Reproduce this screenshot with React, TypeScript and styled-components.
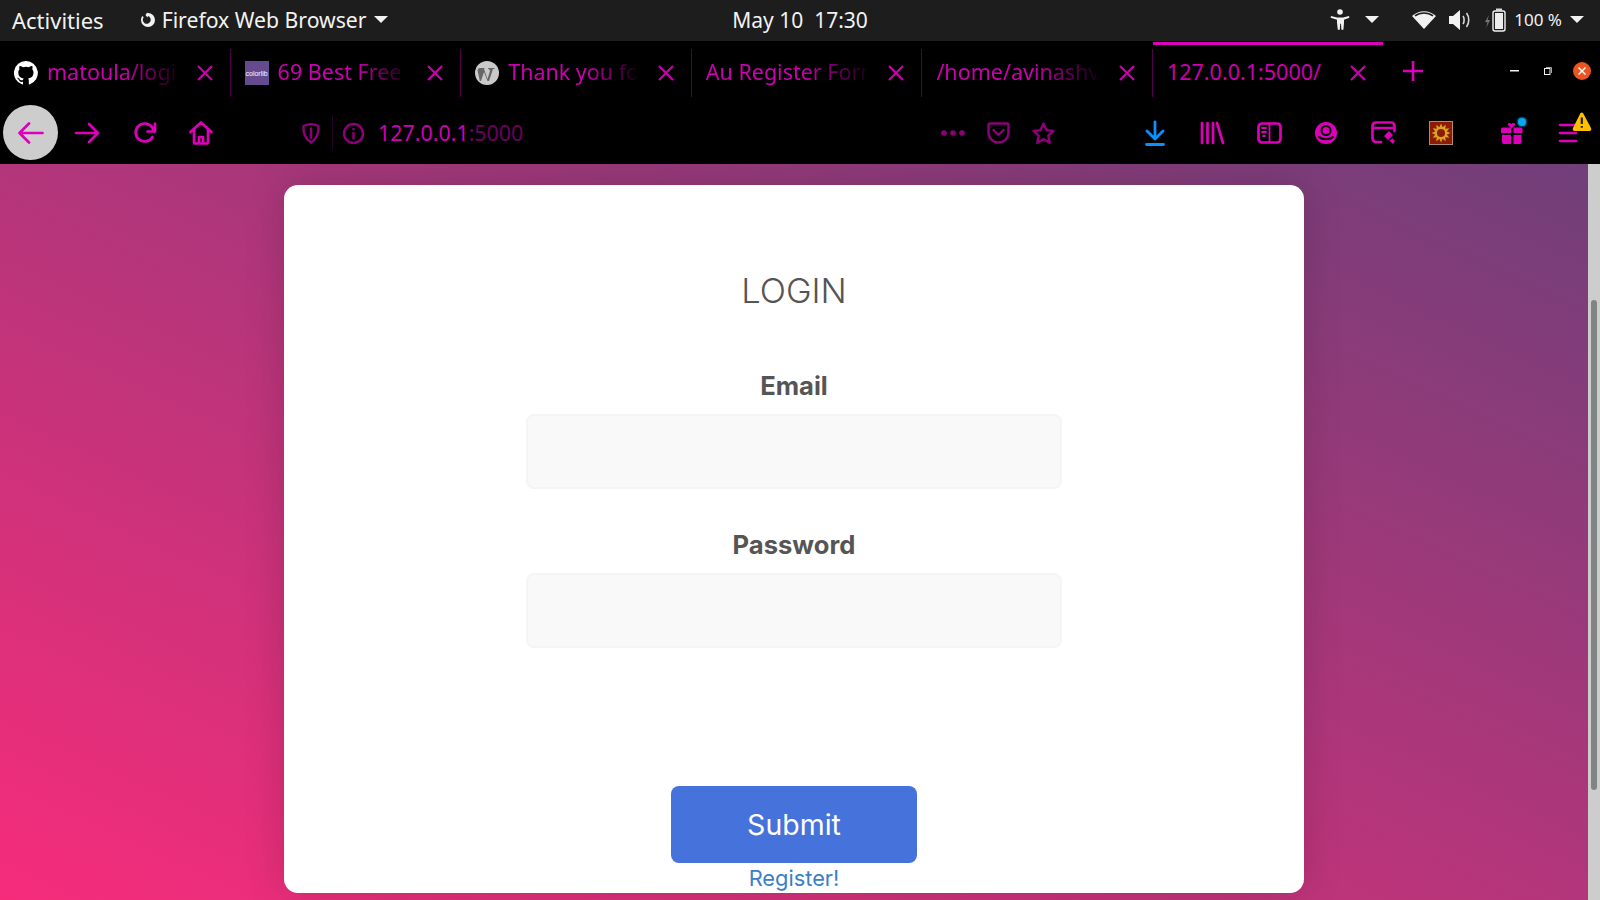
import React from "react";
import styled, { createGlobalStyle } from "styled-components";

const MAGENTA = "#dc00bb";
const DIM = "#8e0079";
const UI_FONT = '"Noto Sans", "DejaVu Sans", sans-serif';
const FORM_FONT = '"Inter", "Open Sans", sans-serif';

const GlobalStyle = createGlobalStyle`
  html, body {
    margin: 0;
    padding: 0;
    height: 100%;
    overflow: hidden;
    background: #000;
  }
  #root {
    height: 100%;
  }
`;

const Screen = styled.div`
  display: flex;
  flex-direction: column;
  width: 1600px;
  height: 900px;
  overflow: hidden;
`;

/* gnome top bar */
const TopBar = styled.div`
  display: grid;
  grid-template-columns: 1fr auto 1fr;
  align-items: center;
  box-sizing: border-box;
  height: 41px;
  padding-bottom: 2px;
  background: #1d1d1d;
  color: #f2f2f2;
  font: 400 21px ${UI_FONT};
`;

const TopLeft = styled.div`
  display: flex;
  align-items: center;
  padding-left: 12px;
`;

const TopRight = styled.div`
  display: flex;
  align-items: center;
  justify-content: flex-end;
  padding-right: 16px;
`;

const TopText = styled.span<{ $left?: number; $size?: number }>`
  margin-left: ${(p) => p.$left ?? 0}px;
  font-size: ${(p) => p.$size ?? 21}px;
  white-space: nowrap;
`;

const Caret = styled.span<{ $left: number }>`
  width: 0;
  height: 0;
  margin-left: ${(p) => p.$left}px;
  border-left: 7px solid transparent;
  border-right: 7px solid transparent;
  border-top: 7px solid #f2f2f2;
`;

const TopIcon = styled.svg<{ $left: number }>`
  margin-left: ${(p) => p.$left}px;
  flex: none;
`;

/* tabs */
const TabBar = styled.div`
  display: flex;
  align-items: stretch;
  height: 61px;
  background: #000;
`;

const Tab = styled.div<{ $active?: boolean }>`
  position: relative;
  display: flex;
  align-items: center;
  flex: none;
  box-sizing: border-box;
  width: 230.6px;
  padding-left: 14px;
  margin-top: 8px;
  height: 48px;
  border-right: 1px solid ${(p) => (p.$active ? "transparent" : "#52004a")};
  &::before {
    content: "";
    display: ${(p) => (p.$active ? "block" : "none")};
    position: absolute;
    left: 0;
    right: 0;
    top: -7px;
    height: 3px;
    background: ${MAGENTA};
  }
`;

const TabTitle = styled.span<{ $width: number; $gap?: number }>`
  width: ${(p) => p.$width}px;
  margin-left: ${(p) => p.$gap ?? 0}px;
  margin-top: -4px;
  overflow: hidden;
  white-space: nowrap;
  color: #cb00ae;
  font: 400 21.5px ${UI_FONT};
  mask-image: linear-gradient(to right, #000 60%, rgba(0, 0, 0, 0.12) 100%);
`;

const TabClose = styled.svg`
  flex: none;
  margin-left: auto;
  margin-right: 17px;
`;

const ActiveTitle = styled(TabTitle)`
  mask-image: none;
`;

const Favicon = styled.svg`
  flex: none;
`;

const ColorlibIcon = styled.div`
  display: flex;
  align-items: center;
  justify-content: center;
  flex: none;
  width: 24px;
  height: 24px;
  overflow: hidden;
  background: #654a8e;
  color: #fff;
  font: 400 7px "Liberation Sans", sans-serif;
`;

const AddTab = styled.svg`
  align-self: center;
  margin: -2px 0 0 18px;
`;

const WindowControls = styled.div`
  display: flex;
  align-items: center;
  margin-left: auto;
  margin-top: -2px;
  padding-right: 9px;
`;

const WindowButton = styled.svg<{ $left: number }>`
  margin-left: ${(p) => p.$left}px;
`;

/* navigation toolbar */
const NavBar = styled.div`
  display: flex;
  align-items: center;
  height: 62px;
  background: #000;
  padding-left: 3px;
`;

const BackCircle = styled.div`
  display: flex;
  align-items: center;
  justify-content: center;
  flex: none;
  width: 55px;
  height: 55px;
  margin-top: -1px;
  border-radius: 50%;
  background: #cdcdcd;
`;

const NavIcon = styled.svg<{ $left: number }>`
  flex: none;
  margin-left: ${(p) => p.$left}px;
  overflow: visible;
`;

const UrlDivider = styled.div`
  flex: none;
  width: 1px;
  height: 34px;
  margin-left: 12px;
  background: #2a0026;
`;

const UrlText = styled.div`
  flex: none;
  width: 562px;
  margin-left: 14px;
  margin-top: -2px;
  font: 400 21.4px ${UI_FONT};
  color: #d000b4;
`;

const UrlPort = styled.span`
  color: #6d0060;
`;

const SunBox = styled.div`
  display: flex;
  align-items: center;
  justify-content: center;
  flex: none;
  box-sizing: border-box;
  width: 24px;
  height: 24px;
  margin-left: 33px;
  background: #8e1a00;
  border: 1px solid #b08a70;
`;

/* page */
const Viewport = styled.div`
  display: flex;
  flex: 1;
  min-height: 0;
`;

const Page = styled.main`
  display: flex;
  justify-content: center;
  align-items: flex-start;
  flex: 1;
  padding-top: 21px;
  background: linear-gradient(to top right, #f62c7b 0%, #703f79 100%);
`;

const Card = styled.form`
  display: flex;
  flex-direction: column;
  align-items: center;
  box-sizing: border-box;
  width: 1020px;
  height: 708px;
  padding-top: 84px;
  background: #fff;
  border-radius: 14px;
  box-shadow: 0 0 40px rgba(0, 0, 0, 0.16);
  font-family: ${FORM_FONT};
`;

const Title = styled.h1`
  margin: 0 0 57px;
  font: 300 34.5px/44px ${FORM_FONT};
  color: #555;
`;

const FieldLabel = styled.label`
  font: 700 25.6px/32px ${FORM_FONT};
  color: #555;
`;

const TextField = styled.input<{ $after: number }>`
  display: block;
  box-sizing: border-box;
  width: 536px;
  height: 75px;
  margin: 12px 0 ${(p) => p.$after}px;
  background: #f9f9f9;
  border: 2px solid #f5f5f5;
  border-radius: 8px;
  outline: none;
`;

const SubmitButton = styled.button`
  width: 246px;
  height: 77px;
  margin-top: 138px;
  padding: 0;
  border: 0;
  border-radius: 8px;
  background: #4672db;
  color: #fff;
  font: 400 28.5px ${FORM_FONT};
`;

const RegisterLink = styled.a`
  margin-top: 1px;
  font: 400 21.8px/28px ${FORM_FONT};
  color: #3a80c4;
`;

const ScrollTrack = styled.div`
  flex: none;
  box-sizing: border-box;
  width: 12px;
  padding: 136px 3px 0;
  background: #cdcdcd;
`;

const ScrollThumb = styled.div`
  height: 490px;
  border-radius: 3px;
  background: #7f8583;
`;

const CloseX = () => (
  <TabClose width="16" height="16" viewBox="0 0 16 16" fill="none" stroke="#cf00b2" strokeWidth="2">
    <path d="M1 1l14 14M15 1L1 15" />
  </TabClose>
);

const stroke = { fill: "none", stroke: MAGENTA, strokeWidth: 2.7, strokeLinecap: "round", strokeLinejoin: "round" } as const;
const dim = { fill: "none", stroke: DIM, strokeWidth: 2.4, strokeLinecap: "round", strokeLinejoin: "round" } as const;

// spiky sun for the extension button
const sunPoints = Array.from({ length: 24 }, (_, i) => {
  const r = i % 2 === 0 ? 9.6 : 6;
  const a = (i * Math.PI) / 12;
  return `${(10 + r * Math.cos(a)).toFixed(2)},${(10 + r * Math.sin(a)).toFixed(2)}`;
}).join(" ");

export default function App() {
  return (
    <Screen>
      <GlobalStyle />
      <TopBar>
        <TopLeft>
          <TopText $size={22}>Activities</TopText>
          <TopIcon $left={36} width="16" height="16" viewBox="0 0 16 16">
            <path d="M8 1a7 7 0 1 1-7 7c0-1.600.6-3 1.500-4l1.200 1.200A4 4 0 1 0 8 4l-.5 1.400L5.500 3 7 .8z" fill="#f2f2f2" />
          </TopIcon>
          <TopText $left={6} $size={21.2}>Firefox Web Browser</TopText>
          <Caret $left={7} />
        </TopLeft>
        <TopText>May 10&nbsp;&nbsp;17:30</TopText>
        <TopRight>
          <TopIcon $left={0} width="20" height="22" viewBox="0 0 20 22">
            <circle cx="10" cy="3" r="2.800" fill="#f2f2f2" />
            <path d="M1 7l6 1.400h6L19 7l.4 1.700-5.400 2v3l-.6 7h-2l-.4-6h-.8l-.4 6h-2L7 13.700v-3L.6 8.700z" fill="#f2f2f2" />
          </TopIcon>
          <Caret $left={15} />
          <TopIcon $left={33} width="24" height="18" viewBox="0 0 24 18">
            <path d="M12 18L0 5c7-6.500 17-6.500 24 0z" fill="#f2f2f2" />
            <path d="M3 4.800c5-3.800 13-3.800 18 0" stroke="#1d1d1d" strokeWidth="1.600" fill="none" />
          </TopIcon>
          <TopIcon $left={13} width="22" height="20" viewBox="0 0 22 20">
            <path d="M0 6h4l7-6v20l-7-6H0z" fill="#f2f2f2" />
            <path d="M14 6c1.500 2 1.500 6 0 8M17.500 3c3 4 3 10 0 14" stroke="#d8d8d8" strokeWidth="1.600" fill="none" />
          </TopIcon>
          <TopIcon $left={13} width="22" height="24" viewBox="0 0 22 24">
            <path d="M5 7L1 14h2.500L2 20l4-8H3.500z" fill="#777" />
            <rect x="9" y="3" width="12" height="20" rx="2" fill="none" stroke="#f2f2f2" strokeWidth="1.400" />
            <rect x="12" y="0.500" width="6" height="2.500" fill="#d8d8d8" />
            <rect x="11" y="5" width="8" height="16" fill="#ededed" />
          </TopIcon>
          <TopText $left={8} $size={17}>100 %</TopText>
          <Caret $left={8} />
        </TopRight>
      </TopBar>

      <TabBar>
        <Tab>
          <Favicon width="24" height="24" viewBox="0 0 24 24">
            <path fill="#fff" d="M12 0a12 12 0 0 0-3.800 23.400c.6.100.8-.3.800-.6v-2c-3.300.7-4-1.600-4-1.600-.6-1.400-1.400-1.800-1.400-1.800-1.100-.7.100-.7.100-.7 1.200.1 1.800 1.200 1.800 1.200 1.100 1.800 2.800 1.300 3.500 1 .1-.8.400-1.300.8-1.600-2.700-.3-5.500-1.300-5.500-5.900 0-1.300.5-2.400 1.200-3.200-.1-.3-.5-1.500.1-3.200 0 0 1-.3 3.300 1.200a11.500 11.500 0 0 1 6 0c2.300-1.500 3.300-1.200 3.300-1.200.7 1.700.2 2.900.1 3.200.8.800 1.200 1.900 1.200 3.200 0 4.600-2.800 5.600-5.500 5.900.4.400.8 1.100.8 2.200v3.300c0 .3.200.7.800.6A12 12 0 0 0 12 0z" />
          </Favicon>
          <TabTitle $width={128} $gap={9}>matoula/login</TabTitle>
          <CloseX />
        </Tab>
        <Tab>
          <ColorlibIcon>colorlib</ColorlibIcon>
          <TabTitle $width={128} $gap={9}>69 Best Free</TabTitle>
          <CloseX />
        </Tab>
        <Tab>
          <Favicon width="24" height="24" viewBox="0 0 24 24">
            <circle cx="12" cy="12" r="12" fill="#c9c9c9" />
            <path d="M4 7h6l-1 1 3.500 10L15 10l-1-2h-1V7h6.500v1H18l-4 12h-1.500L9 11l-3 9H4.800L2.500 9" fill="#666" />
          </Favicon>
          <TabTitle $width={128} $gap={9}>Thank you fo</TabTitle>
          <CloseX />
        </Tab>
        <Tab>
          <TabTitle $width={160}>Au Register Form</TabTitle>
          <CloseX />
        </Tab>
        <Tab>
          <TabTitle $width={160}>/home/avinashvl</TabTitle>
          <CloseX />
        </Tab>
        <Tab $active>
          <ActiveTitle $width={160}>127.0.0.1:5000/</ActiveTitle>
          <CloseX />
        </Tab>
        <AddTab width="22" height="22" viewBox="0 0 22 22" stroke={MAGENTA} strokeWidth="2.600">
          <path d="M11 1v20M1 11h20" />
        </AddTab>
        <WindowControls>
          <WindowButton $left={0} width="9" height="2" viewBox="0 0 9 2">
            <rect width="9" height="1.500" fill="#f2f2f2" />
          </WindowButton>
          <WindowButton $left={25} width="8" height="8" viewBox="0 0 8 8" fill="none" stroke="#f2f2f2">
            <rect x="0.500" y="1.500" width="5.500" height="6" />
            <path d="M2 .5h5.500v5.500" stroke="#a8a8a8" />
          </WindowButton>
          <WindowButton $left={21} width="18" height="18" viewBox="0 0 18 18">
            <circle cx="9" cy="9" r="9" fill="#e95420" />
            <path d="M5.500 5.500l7 7M12.500 5.500l-7 7" stroke="#fff" strokeWidth="1.500" />
          </WindowButton>
        </WindowControls>
      </TabBar>

      <NavBar>
        <BackCircle>
          <svg width="26" height="22" viewBox="0 0 26 22" {...stroke}>
            <path d="M1.500 11h23M11 1.500L1.500 11l9.500 9.500" />
          </svg>
        </BackCircle>
        <NavIcon $left={17} width="24" height="22" viewBox="0 0 24 22" {...stroke}>
          <path d="M1 11h22M14 2l9 9-9 9" />
        </NavIcon>
        <NavIcon $left={35} width="22" height="22" viewBox="0 0 22 22" {...stroke}>
          <path d="M18.500 15a9 9 0 1 1 0-9l2 3.500M21 1.500v8h-7.500" />
        </NavIcon>
        <NavIcon $left={33} width="24" height="24" viewBox="0 0 24 24" {...stroke}>
          <path d="M1.500 11L12 1.500 22.500 11M5 8v13a1.500 1.500 0 0 0 1.500 1.500h11A1.500 1.500 0 0 0 19 21V8M10 22v-6h4v6" />
        </NavIcon>
        <NavIcon $left={89} width="18" height="21" viewBox="0 0 18 21" {...dim}>
          <path d="M1.500 3c5-2.500 10-2.500 15 0 .5 7-1.500 12.500-7.500 16.500C3 15.500 1 10 1.500 3zM9 5.500v9" />
        </NavIcon>
        <UrlDivider />
        <NavIcon $left={10} width="21" height="21" viewBox="0 0 21 21" {...dim}>
          <circle cx="10.500" cy="10.500" r="9.500" />
          <path d="M10.500 10v5.500M10.500 6v.2" />
        </NavIcon>
        <UrlText>
          127.0.0.1<UrlPort>:5000</UrlPort>
        </UrlText>
        <NavIcon $left={1} width="24" height="6" viewBox="0 0 24 6" fill={DIM}>
          <circle cx="3" cy="3" r="2.800" />
          <circle cx="12" cy="3" r="2.800" />
          <circle cx="21" cy="3" r="2.800" />
        </NavIcon>
        <NavIcon $left={22} width="23" height="22" viewBox="0 0 23 22" {...dim}>
          <path d="M1.500 3A1.500 1.500 0 0 1 3 1.500h17A1.500 1.500 0 0 1 21.500 3v7.500a10 10 0 0 1-20 0zM6.500 8l5 5 5-5" />
        </NavIcon>
        <NavIcon $left={22} width="23" height="23" viewBox="0 0 23 23" {...dim}>
          <path d="M11.500 1.500l3 6.600 7 .8-5.200 4.800 1.400 7.100-6.200-3.600-6.200 3.600 1.400-7.100L1.500 8.900l7-.8z" />
        </NavIcon>
        <NavIcon $left={90} width="20" height="25" viewBox="0 0 20 25" fill="none" stroke="#0a90ff" strokeWidth="2.800" strokeLinecap="round" strokeLinejoin="round">
          <path d="M10 1v16M2 10l8 8 8-8M1.500 23.500h17" />
        </NavIcon>
        <NavIcon $left={35} width="24" height="24" viewBox="0 0 24 24" {...stroke}>
          <path d="M2 2v20M7.500 2v20M13 2v20M17 2l6 20" />
        </NavIcon>
        <NavIcon $left={33} width="25" height="22" viewBox="0 0 25 22" {...stroke}>
          <rect x="1.500" y="1.500" width="22" height="19" rx="3.500" />
          <path d="M12.500 1.500v19M5 6h4M5 10h4M6 14h2" strokeWidth="1.800" />
        </NavIcon>
        <NavIcon $left={33} width="22" height="22" viewBox="0 0 22 22">
          <circle cx="11" cy="11" r="11" fill={MAGENTA} />
          <circle cx="11" cy="8.500" r="4.500" fill="none" stroke="#000" strokeWidth="2" />
          <path d="M3.500 14.500c3.500 3.500 11.500 3.500 15 0" stroke="#000" strokeWidth="2" fill="none" />
        </NavIcon>
        <NavIcon $left={34} width="25" height="24" viewBox="0 0 25 24">
          <path d="M10 21H5a3.500 3.500 0 0 1-3.500-3.500v-13A3.500 3.500 0 0 1 5 1.500h15A3.500 3.500 0 0 1 23.500 5v5M1.500 7h22" {...stroke} />
          <path d="M13 15l5-5 4 4-5 5zM18.500 19.500l3-2 2.500 2.500-2 3z" fill={MAGENTA} />
        </NavIcon>
        <SunBox>
          <svg width="20" height="20" viewBox="0 0 20 20">
            <polygon points={sunPoints} fill="#d8a428" />
            <circle cx="10" cy="10" r="4" fill="#8e1a00" />
          </svg>
        </SunBox>
        <NavIcon $left={47} width="28" height="27" viewBox="0 2 28 27">
          <path d="M1 11a1.500 1.500 0 0 1 1.500-1.500h8.500V15H1zM13.500 9.500H21a1.500 1.500 0 0 1 1.500 1.500v4h-9zM2 17h9v9H4a2 2 0 0 1-2-2zM13.500 17h8v7a2 2 0 0 1-2 2h-6z" fill={MAGENTA} />
          <path d="M11.500 10.500L8 7C7 5 10 4 11.500 6 13 4 16 5 15 7z" fill={MAGENTA} />
          <circle cx="22" cy="4" r="5.500" fill="#04405e" />
          <circle cx="22" cy="4" r="4" fill="#08a8f0" />
        </NavIcon>
        <NavIcon $left={29} width="38" height="42" viewBox="0 0 38 42" fill="none">
          <path d="M3 13h16M3 21h16M3 29h16" stroke={MAGENTA} strokeWidth="2.600" strokeLinecap="round" />
          <path d="M23.500 1a2 2 0 0 1 2.500 0l8 15a2 2 0 0 1-1.500 3h-15a2 2 0 0 1-1.500-3z" fill="#ffbf00" />
          <path d="M24.800 5.500V12M24.800 14v1.800" stroke="#222" strokeWidth="2.200" />
        </NavIcon>
      </NavBar>

      <Viewport>
        <Page>
          <Card>
            <Title>LOGIN</Title>
            <FieldLabel>Email</FieldLabel>
            <TextField type="email" $after={40} />
            <FieldLabel>Password</FieldLabel>
            <TextField type="password" $after={0} />
            <SubmitButton type="button">Submit</SubmitButton>
            <RegisterLink>Register!</RegisterLink>
          </Card>
        </Page>
        <ScrollTrack>
          <ScrollThumb />
        </ScrollTrack>
      </Viewport>
    </Screen>
  );
}
